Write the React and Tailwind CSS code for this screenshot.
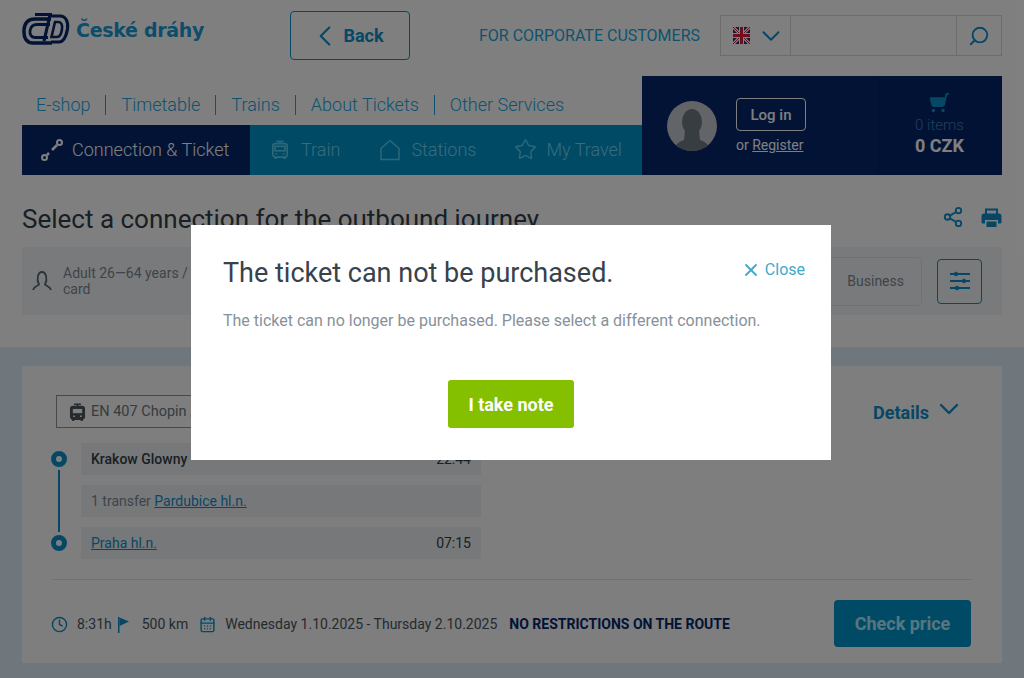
import { ChevronLeft, ChevronDown, Search, Star, Share2, X, Clock, CalendarDays, ShoppingCart } from 'lucide-react'

const menu = ['E-shop', 'Timetable', 'Trains', 'About Tickets', 'Other Services']

function Logo() {
  return (
    <svg width="48" height="32" viewBox="0 0 48 32" fill="none" stroke="#04276b" className="shrink-0">
      <path d="M29 6H13C6 6 2.500 10 2 17C1.500 25 4.500 30 11 30H30" strokeWidth="3.500" />
      <path d="M28 11.500H15C10.500 11.500 8.500 14 8 18C7.500 22 9.500 24.500 13.500 24.500H26" strokeWidth="2.800" />
      <path d="M13 1.500H30" strokeWidth="3" />
      <path d="M28 2L22 28M29 29H37C42 29 44 24 45.500 16C46.500 9 44 3 38 3H28" strokeWidth="3.200" />
      <path d="M33 9L29.500 24H35C38.500 24 39.500 20 40 16C40.500 12 39.500 9 36.500 9H33Z" strokeWidth="2.600" />
    </svg>
  )
}

function UkFlag() {
  return (
    <svg width="17" height="17" viewBox="0 0 17 17" className="shrink-0">
      <rect width="17" height="17" fill="#2a2f80" />
      <path d="M0 0L17 17M17 0L0 17" stroke="#fff" strokeWidth="3" />
      <path d="M0 0L17 17M17 0L0 17" stroke="#d8203a" strokeWidth="1" />
      <path d="M8.500 0V17M0 8.500H17" stroke="#fff" strokeWidth="5" />
      <path d="M8.500 0V17M0 8.500H17" stroke="#d8203a" strokeWidth="3" />
    </svg>
  )
}

function RouteIcon() {
  return (
    <svg width="24" height="24" viewBox="0 0 24 24" fill="none" stroke="#fff" strokeWidth="2" className="shrink-0">
      <circle cx="4.500" cy="19.500" r="2.500" />
      <circle cx="19.500" cy="4.500" r="2.500" />
      <path d="M7 17L9 15M12 12L17 7" strokeWidth="2.500" />
    </svg>
  )
}

function TrainIcon({ size, color, filled }) {
  return (
    <svg width={size} height={size * 1.1} viewBox="0 0 20 22" fill="none" stroke={color} strokeWidth="1.800" className="shrink-0">
      <path d="M6 1.500H14M10 1.500V4" />
      <rect x="2" y="4" width="16" height="15" rx="3" fill={filled ? color : 'none'} />
      <rect x="4.500" y="7" width="11" height="5" fill={filled ? '#fcfcfc' : 'none'} stroke={filled ? 'none' : color} />
      <path d="M5 19V21.500M15 19V21.500" strokeWidth="2.500" />
      <path d="M5 15.500H7M13 15.500H15" stroke={filled ? '#fcfcfc' : color} />
    </svg>
  )
}

function HouseIcon() {
  return (
    <svg width="20" height="22" viewBox="0 0 20 22" fill="none" stroke="#55d0f5" strokeWidth="1.500" className="shrink-0">
      <path d="M1 9.500L10 1.500L19 9.500V20.500H1Z" strokeLinejoin="round" />
    </svg>
  )
}

function FlagIcon() {
  return (
    <svg width="11" height="16" viewBox="0 0 11 16" fill="#0f8fcc" className="shrink-0">
      <path d="M0 0H1.500V16H0Z" />
      <path d="M1.500 0.500L11 4.500L1.500 9Z" />
    </svg>
  )
}

function PrinterIcon() {
  return (
    <svg width="21" height="21" viewBox="0 0 21 21" fill="#0f8fcc" className="shrink-0">
      <path d="M4 1.500H17V7H15V3.500H6V7H4Z" />
      <path d="M3 6.500H18C19.500 6.500 20.500 7.500 20.500 9V15C20.500 16 20 16.500 19 16.500H17V13H4V16.500H2C1 16.500 0.500 16 0.500 15V9C0.500 7.500 1.500 6.500 3 6.500Z" />
      <path d="M5.500 14.500H15.500V20H5.500Z" />
    </svg>
  )
}

function SlidersIcon() {
  return (
    <svg width="22" height="20" viewBox="0 0 22 20" fill="#0f8fcc" stroke="#0f8fcc" strokeWidth="2" className="shrink-0">
      <path d="M1 3H21M1 10H21M1 17H21" />
      <circle cx="7" cy="3" r="1.800" strokeWidth="1" />
      <circle cx="15" cy="10" r="1.800" strokeWidth="1" />
      <circle cx="8" cy="17" r="1.800" strokeWidth="1" />
    </svg>
  )
}

function Avatar() {
  return (
    <div className="w-[50px] h-[50px] rounded-full bg-[#c4c9ce] overflow-hidden shrink-0">
      <svg width="50" height="50" viewBox="0 0 50 50" fill="#707b85">
        <ellipse cx="25" cy="21" rx="10" ry="13" />
        <path d="M18 30H32L33 39C38 41 42 43 44 50H6C8 43 12 41 17 39Z" />
      </svg>
    </div>
  )
}

function Stop() {
  return <div className="w-4 h-4 rounded-full border-[5px] border-[#0f8fcc] bg-white shrink-0" />
}

export default function App() {
  return (
    <div className="relative w-[1024px] h-[678px] overflow-hidden bg-white font-['Roboto',sans-serif] text-[#33404a]">
      {/* Header */}
      <div className="px-[22px]">
        <div className="flex h-[76px]">
          <div className="flex gap-[6px] pt-[13px] w-[268px]">
            <Logo />
            <span className="font-['DejaVu_Sans',sans-serif] font-bold text-[19px] leading-[34px] text-[#1a9ad6] tracking-[-0.3px]">České dráhy</span>
          </div>
          <button className="mt-[11px] w-[120px] h-[49px] flex items-center justify-center gap-[1px] rounded border border-[#0f8fcc] text-[#0f8fcc] text-[18px] font-bold">
            <ChevronLeft size={34} strokeWidth={1.500} className="-ml-[8px]" />
            Back
          </button>
          <span className="ml-[69px] mt-[26px] text-[16px] leading-[20px] text-[#1aa6e0]">FOR CORPORATE CUSTOMERS</span>
          <div className="ml-[20px] mt-[15px] w-[282px] h-[41px] flex border border-[#d8d8d8]">
            <div className="w-[70px] flex items-center pl-[12px] gap-[6px] border-r border-[#d8d8d8]">
              <UkFlag />
              <ChevronDown size={30} strokeWidth={1.600} className="text-[#0f8fcc]" />
            </div>
            <div className="flex-1" />
            <div className="w-[45px] flex items-center justify-center border-l border-[#d8d8d8]">
              <Search size={22} className="text-[#0f8fcc] -scale-x-100" />
            </div>
          </div>
        </div>

        <div className="flex h-[99px]">
          <div className="w-[620px] flex flex-col">
            <div className="h-[49px] flex items-center pl-[14px] pt-[8px] text-[18px] font-light text-[#1aa6e0]">
              {menu.map((m, i) => (
                <span key={m} className={i > 0 ? 'ml-[15px] pl-[15px] border-l border-[#1aa6e0] leading-[20px]' : 'leading-[20px]'}>{m}</span>
              ))}
            </div>
            <div className="h-[50px] flex text-[18px] font-light">
              <div className="w-[228px] bg-[#04276b] text-white flex items-center pl-[18px] pb-[1px] gap-[8px]">
                <RouteIcon />
                Connection &amp; Ticket
              </div>
              <div className="flex-1 bg-[#0095cc] text-[#70d8f8] flex items-center pl-[21px] pb-[1px]">
                <TrainIcon size={18} color="#55d0f5" />
                <span className="ml-[12px]">Train</span>
                <span className="ml-[40px]"><HouseIcon /></span>
                <span className="ml-[11px]">Stations</span>
                <Star size={23} strokeWidth={1.500} className="ml-[38px] text-[#55d0f5]" />
                <span className="ml-[9px]">My Travel</span>
              </div>
            </div>
          </div>
          <div className="w-[360px] bg-[#04276b] flex text-white">
            <div className="flex-1 flex items-center pl-[25px] gap-[19px]">
              <Avatar />
              <div className="pt-[2px]">
                <div className="w-[70px] h-[33px] pt-[1px] rounded border border-white flex items-center justify-center text-[15px] font-medium">Log in</div>
                <div className="mt-[4px] text-[14px] leading-[20px]">or <span className="underline">Register</span></div>
              </div>
            </div>
            <div className="w-[124px] border-l border-[#032260] bg-[#042568] flex flex-col items-center pt-[16px] pr-[2px]">
              <ShoppingCart size={21} fill="#0f8fcc" className="text-[#0f8fcc] -scale-x-100" />
              <span className="mt-[3px] text-[15px] leading-[18px] font-light text-[#3c7fc0]">0 items</span>
              <span className="text-[18px] leading-[24px] font-bold">0 CZK</span>
            </div>
          </div>
        </div>

        {/* Title */}
        <div className="h-[72px] flex items-center justify-between pt-[16px]">
          <h1 className="text-[26px] leading-[32px] font-normal">Select a connection for the outbound journey</h1>
          <div className="flex items-center gap-[17px] mb-[4px]">
            <Share2 size={22} className="text-[#0f8fcc]" />
            <PrinterIcon />
          </div>
        </div>

        {/* Filter */}
        <div className="h-[68px] bg-[#f2f5f8] flex items-center pl-[9px] pr-[20px]">
          <svg width="22" height="22" viewBox="0 0 22 22" fill="none" stroke="#5d6770" strokeWidth="1.800" className="shrink-0">
            <path d="M2 20C3 16 7 16 8 14.500C5 9 7 2 11 2C15 2 17 9 14 14.500C15 16 19 16 20 20" />
          </svg>
          <div className="ml-[10px] w-[130px] text-[14px] leading-[16px] text-[#7d8993]">Adult 26—64 years / card</div>
          <div className="ml-auto w-[120px] h-[49px] rounded border border-[#dfe3e6] flex items-center justify-end pr-[17px] text-[14px] text-[#7d8993]">Business</div>
          <div className="ml-[15px] w-[45px] h-[45px] rounded border border-[#0f8fcc] flex items-center justify-center">
            <SlidersIcon />
          </div>
        </div>
      </div>

      {/* Results */}
      <div className="mt-[32px] h-[331px] bg-[#dfecf8] px-[22px] pt-[19px]">
        <div className="h-[297px] bg-[#fcfcfc] px-[30px] pt-[29px]">
          <div className="flex justify-between items-start h-[33px]">
            <div className="w-[200px] h-[33px] pt-[1px] flex items-center border border-[#8e959b] pl-[12px] gap-[5px] ml-[4px] text-[14.500px] text-[#6e7880]">
              <TrainIcon size={17} color="#4b555e" filled />
              EN 407 Chopin /
            </div>
            <div className="flex items-center gap-[4px] text-[#0f8fcc] font-bold text-[18px] pt-[4px] pr-[7px]">
              Details
              <ChevronDown size={32} strokeWidth={1.800} className="-mt-[8px]" />
            </div>
          </div>

          <div className="mt-[15px] -ml-[1px] flex flex-col gap-[10px] w-[430px] text-[14px]">
            <div className="flex items-center h-[32px]">
              <Stop />
              <div className="ml-[14px] flex-1 h-full bg-[#eff1f3] flex items-center justify-between px-[10px] font-medium">
                <span>Krakow Glowny</span>
                <span className="font-normal">22:44</span>
              </div>
            </div>
            <div className="flex items-center h-[32px]">
              <div className="w-4 flex justify-center self-stretch -my-[15px]"><div className="w-[2px] bg-[#0f8fcc]" /></div>
              <div className="ml-[14px] flex-1 h-full bg-[#eff1f3] flex items-center px-[10px] text-[#7d8993]">
                <span>1 transfer <span className="underline text-[#0f8fcc]">Pardubice hl.n.</span></span>
              </div>
            </div>
            <div className="flex items-center h-[32px]">
              <Stop />
              <div className="ml-[14px] flex-1 h-full bg-[#eff1f3] flex items-center justify-between px-[10px]">
                <span className="underline text-[#0f8fcc]">Praha hl.n.</span>
                <span>07:15</span>
              </div>
            </div>
          </div>

          <div className="mt-[20px] border-t border-[#e4e4e4] h-[88px] flex items-center justify-between pr-[1px]">
            <div className="flex items-center pt-[2px] text-[14px] text-[#4b555e]">
              <Clock size={17} className="text-[#0f8fcc] -ml-[1px]" />
              <span className="ml-[9px]">8:31h</span>
              <span className="ml-[6px]"><FlagIcon /></span>
              <span className="ml-[13px]">500 km</span>
              <CalendarDays size={17} className="ml-[11px] text-[#0f8fcc]" />
              <span className="ml-[9px]">Wednesday 1.10.2025 - Thursday 2.10.2025</span>
              <span className="ml-[12px] font-bold text-[#04276b]">NO RESTRICTIONS ON THE ROUTE</span>
            </div>
            <button className="w-[137px] h-[47px] rounded bg-[#0095cc] text-[#b0ecff] text-[18px] font-bold">Check price</button>
          </div>
        </div>
      </div>

      {/* Dialog */}
      <div className="absolute inset-0 bg-black/50 flex justify-center pt-[225px] pr-[2px]">
        <div className="w-[640px] h-[235px] bg-white px-[32px] pt-[31px]">
          <div className="flex justify-between">
            <h2 className="text-[27px] leading-[34px] font-normal text-[#37424b]">The ticket can not be purchased.</h2>
            <div className="flex items-center gap-[4px] h-[30px] -mt-[1px] -mr-[6px] text-[16px] text-[#3fa9cc]">
              <X size={20} strokeWidth={2.200} />
              Close
            </div>
          </div>
          <p className="mt-[20px] text-[16px] leading-[22px] text-[#87919a]">The ticket can no longer be purchased. Please select a different connection.</p>
          <div className="mt-[48px] flex justify-center">
            <button className="w-[126px] h-[48px] rounded-[3px] bg-[#84c000] text-white text-[18px] font-bold">I take note</button>
          </div>
        </div>
      </div>
    </div>
  )
}
